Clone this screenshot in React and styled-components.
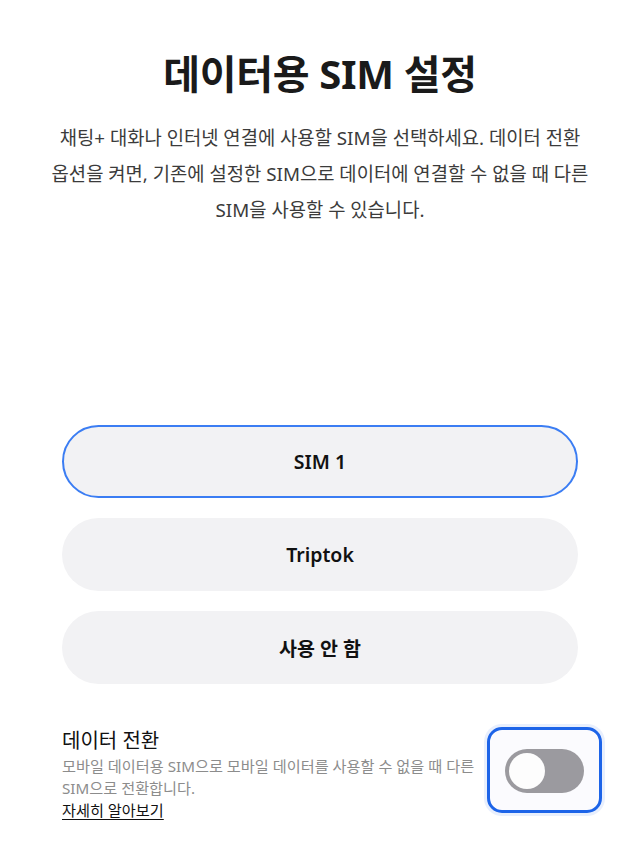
import React from "react";
import styled, { createGlobalStyle } from "styled-components";

const Global = createGlobalStyle`
  html, body { margin: 0; padding: 0; background: #ffffff; }
  body { font-family: "Noto Sans", "Noto Sans CJK KR", sans-serif; color: #111; }
  * { box-sizing: border-box; }
`;

const Page = styled.div`
  width: 640px;
  min-height: 853px;
  padding: 48px 62px 0;
  display: flex;
  flex-direction: column;
`;

const Title = styled.h1`
  margin: 0;
  font-size: 40px;
  line-height: 52px;
  font-weight: 700;
  text-align: center;
  color: #1a1a1a;
  letter-spacing: -0.3px;
`;

const Description = styled.p`
  margin: 20px -20px 0;
  font-size: 18.8px;
  line-height: 36px;
  text-align: center;
  color: #3b3b3b;
  font-weight: 400;
`;

const Options = styled.div`
  margin-top: 197px;
  display: flex;
  flex-direction: column;
  gap: 20px;
`;

const Option = styled.button`
  height: 73px;
  border-radius: 37px;
  border: 2px solid ${(p) => (p.$selected ? "#3b7df3" : "transparent")};
  background: #f2f2f4;
  font-family: inherit;
  font-size: 19.5px;
  font-weight: 600;
  color: #111;
  display: flex;
  align-items: center;
  justify-content: center;
  cursor: pointer;
`;

const SwitchRow = styled.div`
  margin-top: 43px;
  display: flex;
  align-items: flex-start;
  gap: 8px;
  margin-right: -24px;
`;

const SwitchText = styled.div`
  flex: 1;
  display: flex;
  flex-direction: column;
`;

const SwitchTitle = styled.div`
  font-size: 20px;
  line-height: 28px;
  color: #111;
`;

const SwitchSub = styled.div`
  font-size: 15.2px;
  line-height: 22px;
  color: #8c8c8c;
  white-space: nowrap;
`;

const LearnMore = styled.a`
  font-size: 15.2px;
  line-height: 22px;
  color: #111;
  text-decoration: underline;
  text-underline-offset: 3px;
`;

const FocusBox = styled.div`
  flex: none;
  width: 115px;
  height: 86px;
  border: 3px solid #1d64e8;
  border-radius: 15px;
  background: #fbfbfe;
  box-shadow: 0 0 0 3px rgba(29, 100, 232, 0.1);
  display: flex;
  align-items: center;
  justify-content: center;
  padding-top: 1px;
`;

const Track = styled.div`
  width: 79px;
  height: 44px;
  border-radius: 22px;
  background: #9b9a9f;
  display: flex;
  align-items: center;
  padding: 0 4px;
  justify-content: ${(p) => (p.$on ? "flex-end" : "flex-start")};
`;

const Knob = styled.div`
  width: 36px;
  height: 36px;
  border-radius: 50%;
  background: #fdfdfd;
`;

export default function App() {
  return (
    <>
      <Global />
      <Page>
        <Title>데이터용 SIM 설정</Title>
        <Description>
          채팅+ 대화나 인터넷 연결에 사용할 SIM을 선택하세요. 데이터 전환
          <br />
          옵션을 켜면, 기존에 설정한 SIM으로 데이터에 연결할 수 없을 때 다른
          <br />
          SIM을 사용할 수 있습니다.
        </Description>
        <Options>
          <Option $selected>SIM 1</Option>
          <Option>Triptok</Option>
          <Option>사용 안 함</Option>
        </Options>
        <SwitchRow>
          <SwitchText>
            <SwitchTitle>데이터 전환</SwitchTitle>
            <SwitchSub>
              모바일 데이터용 SIM으로 모바일 데이터를 사용할 수 없을 때 다른
              <br />
              SIM으로 전환합니다.
            </SwitchSub>
            <div>
              <LearnMore href="#">자세히 알아보기</LearnMore>
            </div>
          </SwitchText>
          <FocusBox>
            <Track>
              <Knob />
            </Track>
          </FocusBox>
        </SwitchRow>
      </Page>
    </>
  );
}
